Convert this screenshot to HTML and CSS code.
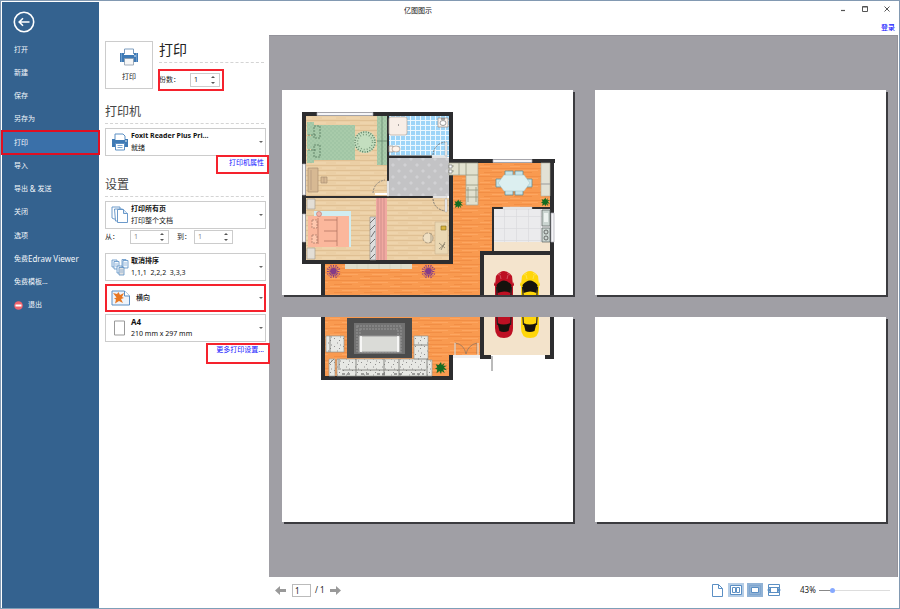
FILE: index.html
```html
<!DOCTYPE html>
<html lang="zh-CN">
<head>
<meta charset="utf-8">
<title>亿图图示</title>
<link rel="stylesheet" href="styles.css">
</head>
<body>
<div class="app">
  <nav class="sidebar">
    <button class="back" aria-label="返回">
      <svg viewBox="0 0 22 22"><circle cx="11" cy="11" r="9.7"/><path d="M16.5 11H6.5M10 7.2L6.2 11l3.8 3.8"/></svg>
    </button>
    <ul class="menu">
      <li><a href="#">打开</a></li>
      <li><a href="#">新建</a></li>
      <li><a href="#">保存</a></li>
      <li><a href="#">另存为</a></li>
      <li><a href="#" class="active marked">打印</a></li>
      <li><a href="#">导入</a></li>
      <li><a href="#">导出 <span class="latin">&amp;</span> 发送</a></li>
      <li><a href="#">关闭</a></li>
      <li><a href="#">选项</a></li>
      <li><a href="#">免费<span class="latin">Edraw Viewer</span></a></li>
      <li><a href="#">免费模板...</a></li>
      <li><a href="#"><svg class="exit" viewBox="0 0 9 9"><circle cx="4.500" cy="4.500" r="4.300" fill="#f0636c"/><rect x="1.500" y="3.500" width="6" height="2" fill="#fff"/></svg>退出</a></li>
    </ul>
  </nav>

  <div class="workspace">
    <header class="titlebar">
      <h1 class="title">亿图图示</h1>
      <div class="window-buttons">
        <button aria-label="最小化"><svg viewBox="0 0 8 8"><path d="M2 5.500h4" stroke-width="1.200"/></svg></button>
        <button aria-label="最大化"><svg viewBox="0 0 8 8"><path d="M1.500 1.500h5v5h-5zM1.500 2h5"/></svg></button>
        <button aria-label="关闭窗口"><svg viewBox="0 0 8 8"><path d="M1.500 1.500l5 5M6.500 1.500l-5 5"/></svg></button>
      </div>
      <a class="login" href="#">登录</a>
    </header>

    <div class="body">
      <main class="settings">
        <section class="print-top">
          <button class="print-button">
            <svg class="printer" viewBox="0 0 20 18"><path d="M5.500 6V1h9v5" fill="#fff" stroke="#7d9dbf"/><path d="M1 5h4v2h10V5h4v9H1z" fill="#3f7ab5"/><path d="M2.500 5v9M17.500 5v9" stroke="#8db4da" stroke-width=".6"/><circle cx="16" cy="8" r=".8" fill="#fff"/><path d="M5.500 10.500h9v6.500h-9z" fill="#f6f6f6" stroke="#8c9bab" stroke-width=".8"/></svg>
            <span>打印</span>
          </button>
          <div class="print-copy">
            <h2 class="main-heading">打印</h2>
            <div class="copies marked">
              <label for="copies">份数：</label>
              <span class="spin"><input id="copies" type="text" value="1"><svg viewBox="0 0 6 10"><path d="M1 3l2-2 2 2zM1 7l2 2 2-2z"/></svg></span>
            </div>
          </div>
        </section>

        <h2 class="heading">打印机</h2>
        <button class="combo" aria-haspopup="listbox">
          <svg class="icon" viewBox="0 0 18 18"><path d="M4 7V1h8l2 2v5" fill="#fff" stroke="#5b8fc4"/><path d="M1 6h3v1h10V6h3v8H1z" fill="#3f7ab5"/><circle cx="15" cy="8" r=".8" fill="#fff"/><path d="M4.500 10.500h9V17h-9z" fill="#fff" stroke="#5b8fc4"/><path d="M6.500 12.500h5M6.500 14.500h5" stroke="#5b8fc4" stroke-width=".8"/></svg>
          <span class="combo-text"><strong>Foxit Reader Plus Pri...</strong><span>就绪</span></span>
          <i class="caret"></i>
        </button>
        <a class="link printer-link marked" href="#">打印机属性</a>

        <h2 class="heading second">设置</h2>
        <button class="combo" aria-haspopup="listbox">
          <svg class="icon" viewBox="0 0 18 18"><g fill="#fff" stroke="#5b8fc4" stroke-width=".9"><path d="M1 1h8v12H3L1 12z"/><path d="M3.500 3h8v12h-7z"/><path d="M6.500 3.500h6l4 4v9h-10z"/><path d="M12.500 3.500v4h4" fill="#dce9f6"/></g></svg>
          <span class="combo-text"><strong>打印所有页</strong><span>打印整个文档</span></span>
          <i class="caret"></i>
        </button>
        <div class="range">
          <label for="from">从：</label>
          <span class="spin"><input id="from" type="text" value="1"><svg viewBox="0 0 6 10"><path d="M1 3l2-2 2 2zM1 7l2 2 2-2z"/></svg></span>
          <label for="to" class="to">到：</label>
          <span class="spin"><input id="to" type="text" value="1"><svg viewBox="0 0 6 10"><path d="M1 3l2-2 2 2zM1 7l2 2 2-2z"/></svg></span>
        </div>
        <button class="combo" aria-haspopup="listbox">
          <svg class="icon" viewBox="0 0 18 18"><g fill="#f4f9fe" stroke="#5b8fc4" stroke-width=".8"><path d="M1 2h5v7H1z"/><path d="M3 3.500h5V11H3z"/><path d="M11 1.500h4V9h-4z"/><path d="M12 2.500h5V10h-5z"/><path d="M6 8h5v7H6z"/><path d="M8 9.500h5V17H8z" fill="#e2e2e2"/></g><path d="M4 6h3M4 8h3M13 5h3M13 7h3M9 12h3M9 14h3" stroke="#7ba5d0" stroke-width=".7"/></svg>
          <span class="combo-text"><strong>取消排序</strong><span>1,1,1  2,2,2  3,3,3</span></span>
          <i class="caret"></i>
        </button>
        <button class="combo marked orientation" aria-haspopup="listbox">
          <svg class="icon wide" viewBox="0 0 20 16"><path d="M1 1h12.500l5 5v9H1z" fill="#eef4fb" stroke="#5b8fc4"/><path d="M13.500 1v5h5" fill="#fff" stroke="#5b8fc4"/><path d="M2 3l4 1 1.500-2 1.500 3 4-2-2 4 2 1-3 1 2 4-4-2-4 2.500 1-4-2-1 2.500-1z" fill="#e87722"/></svg>
          <span class="combo-text">横向</span>
          <i class="caret"></i>
        </button>
        <button class="combo" aria-haspopup="listbox">
          <svg class="icon" viewBox="0 0 18 18"><path d="M3.500 2h10v14h-10z" fill="#fff" stroke="#999"/></svg>
          <span class="combo-text"><strong class="latin">A4</strong><span>210 mm x 297 mm</span></span>
          <i class="caret"></i>
        </button>
        <a class="link more-link marked" href="#">更多打印设置...</a>
      </main>

      <section class="preview-pane">
        <div class="preview">
          <div class="page">
            <svg viewBox="282 90 291 205" role="img" aria-label="户型平面图">
              <defs>
                <pattern id="wood" width="24" height="10" patternUnits="userSpaceOnUse"><path d="M0 0h24v10H0z" fill="#ebcfa5"/><path d="M0 .5h24M0 5.500h24" stroke="#e0c093"/><path d="M0 3h14M10 8h14" stroke="#f2dab3"/></pattern>
                <pattern id="orange" width="30" height="8" patternUnits="userSpaceOnUse"><path d="M0 0h30v8H0z" fill="#f99a50"/><path d="M0 .5h30M4 4.500h18" stroke="#f08b42" stroke-width=".8"/><path d="M12 2.500h16M0 6.500h10" stroke="#ffaa68" stroke-width=".7"/></pattern>
                <pattern id="tile" width="5" height="5" patternUnits="userSpaceOnUse"><path d="M0 0h5v5H0z" fill="#9ed5f8"/><path d="M0 .5h5M.5 0v5" stroke="#ecf8ff"/></pattern>
                <pattern id="grey" width="12" height="12" patternUnits="userSpaceOnUse"><path d="M0 0h12v12H0z" fill="#c3c3c5"/><path d="M3 1l2 2-2 2-2-2zM9 7l2 2-2 2-2-2z" fill="#d1d1d4"/></pattern>
                <pattern id="floor" width="12" height="12" patternUnits="userSpaceOnUse"><path d="M0 0h12v12H0z" fill="#ebebed"/><path d="M0 .5h12M.5 0v12" stroke="#dadadd" stroke-width=".7"/></pattern>
                <pattern id="sage" width="4" height="4" patternUnits="userSpaceOnUse"><path d="M0 0h4v4H0z" fill="#a8cbaa"/><path d="M0 1h2M2 3h2" stroke="#95bb9b" stroke-width=".7"/></pattern>
                <pattern id="marble" width="9" height="8" patternUnits="userSpaceOnUse"><path d="M0 0h9v8H0z" fill="#e7e8e4"/><path d="M1 2l1 1M6 5l1-1M4 7h1M7 1h1" stroke="#777" stroke-width=".8"/></pattern>
                <symbol id="car" viewBox="0 0 20 44"><path d="M2 5Q10-5 18 5l1 9v19q0 10-9 10T1 33V14z" fill="currentColor"/><path d="M1 11l-1 2v2l2-1M19 11l1 2v2l-2-1" fill="currentColor"/><path d="M2.500 14Q10 5 17.500 14l-1 8q-6-3-13 0zM3.500 28q6 3 13 0l-2 8q-5 2-9 0z" fill="#16120d"/><path d="M2.500 16l1 14M17.500 16l-1 14" stroke="#222" stroke-width="1.200"/><path d="M4 4l3-2M16 4l-3-2M6 4l1 4M14 4l-1 4" stroke="#fff" stroke-opacity=".4" stroke-width=".7"/></symbol>
                <symbol id="bush" viewBox="-8 -8 16 16"><path d="M0-8l1 4 4-3-2 4 5 0-4 2 4 4-5-1 2 5-4-3-1 4-2-4-4 3 1-5-3-1 3-2-2-4 4 1z" fill="currentColor"/></symbol>
                <symbol id="flowers" viewBox="-8 -8 16 16"><path d="M0-7V7M-7 0H7M-5-5L5 5M5-5L-5 5M-3-7L3 7M3-7L-3 7M-7-3L7 3M7-3L-7 3" stroke="#843c87" stroke-width="1.200" stroke-dasharray="2 .7"/><circle r="3" fill="#843c87"/></symbol>
              </defs>
              <!-- floors -->
              <path d="M325 263V295H484V252H550V160H452V263z" fill="url(#orange)"/>
              <path d="M305 115H388V197H305zM305 198H449V261H305z" fill="url(#wood)"/>
              <path d="M389 115h60v42h-60z" fill="url(#tile)"/>
              <path d="M389 158h60v38h-60z" fill="url(#grey)"/>
              <path d="M494 209h56v34h-56z" fill="url(#floor)"/>
              <path d="M494 242h56v10h-56zM484 255h66v40h-66z" fill="#f4e4cd"/>
              <!-- walls -->
              <g fill="#2d2d2f">
                <path d="M302 112h151v4H302zM302 112h4v151h-4zM449 112h4v151h-4zM302 260h151v4H302zM321 263h4v32h-4z"/>
                <path d="M387 116h2v66h-2zM389 155.500h43v2.500h-43zM306 196h127v2H306z"/>
                <path d="M449 159h106v4H449zM550 159h4v136h-4zM480 251h70v4h-70zM480 251h4v44h-4zM492 207h2v44h-2zM492 207h11v2h-11zM532 207h18v2h-18z"/>
              </g>
              <path d="M317 112.500h56v3h-56zM302.500 164h3v31h-3zM302.500 214h3v28h-3zM493 159.500h39v3h-39zM551 213h3v29h-3z" fill="#f5f5f7" stroke="#aaaab3" stroke-width=".7"/>
              <path d="M503 207h29v2h-29zM387 181h2v15h-2zM433 196h14v2h-14zM432 156h15v2h-15z" fill="#eee" stroke="#bbb" stroke-width=".4"/>
              <!-- bedroom -->
              <path d="M311 125h44v35h-44zM377 116h10v49h-10zM307 122h7v13h-7zM307 136h7v13h-7zM307 150h7v13h-7z" fill="url(#sage)"/>
              <path d="M314 126h6v12h-6zM308 135h9M308 150h9M314 145h6v12h-6z" fill="none" stroke="#54775c" stroke-width=".8" stroke-dasharray="2 1"/>
              <path d="M382 116v49M377 141h10" stroke="#5f8068" stroke-width=".7"/>
              <circle cx="365" cy="142" r="11" fill="#c3debf"/><circle cx="365" cy="142" r="10" fill="none" stroke="#587a5e" stroke-width="1.500" stroke-dasharray="1 1.500"/><circle cx="365" cy="142" r="7.500" fill="none" stroke="#7c9d7f" stroke-width="1.500" stroke-dasharray="1 2"/>
              <path d="M308 168h10v24h-10zM321 177h6v6h-6z" fill="#d7b993" stroke="#ab9173" stroke-width=".7"/><path d="M311 170v20M324 177v6" stroke="#a98f78" stroke-width=".6"/>
              <path d="M373 193q1-11 12-13" fill="none" stroke="#777" stroke-width=".8" stroke-dasharray="2 1"/><path d="M375 193h12v2h-12z" fill="#fff"/>
              <!-- bathroom -->
              <rect x="389" y="117" width="18" height="18" rx="2" fill="#f8eee7" stroke="#b7a69b" stroke-width=".7"/><path d="M438 118h10v9h-10zM389 146h4v6h-4z" fill="#faf3ee" stroke="#998d85" stroke-width=".7"/>
              <ellipse cx="443" cy="123" rx="3" ry="2.500" fill="#fff" stroke="#777" stroke-width=".7"/><ellipse cx="396" cy="149" rx="4" ry="3" fill="#fff3ea" stroke="#ad9c90" stroke-width=".7"/><path d="M398 125h1M441 119h4" stroke="#555"/>
              <path d="M433 155q1-11 12-13M433 199q1 10 12 12" fill="none" stroke="#666" stroke-width=".8" stroke-dasharray="2 1"/><path d="M445 142h2v14h-2zM445 199h2v13h-2z" fill="#f5f5f5" stroke="#999" stroke-width=".4"/>
              <!-- lower rooms -->
              <path d="M307 199h8v10h-8zM307 248h8v11h-8z" fill="#e3ded5" stroke="#a9a093" stroke-width=".7"/>
              <path d="M314 211h37v36h-37z" fill="#d0edf1"/><path d="M308 216h41v31h-41z" fill="#fbb79c"/><path d="M337 217v29M324 220h13M324 231h13M324 241h13M318 218v26" stroke="#ae6e5d" stroke-width=".7"/><path d="M312 220h5v8h-5zM312 235h5v8h-5z" fill="#ffc7ad" stroke="#966858" stroke-width=".6" stroke-dasharray="2 1"/><circle cx="319" cy="214" r="2.500" fill="#f3b4a6" stroke="#bb7469" stroke-width=".6"/>
              <path d="M370 217h6v43h-6z" fill="#ddd" stroke="#888" stroke-width=".6"/><path d="M370 223l5-5M370 230l5-5M371 237l4-6M370 244l5-5M371 252l4-6M370 259l5-5" stroke="#555" stroke-width=".8"/>
              <path d="M376 198h11v62h-11z" fill="#f1a9a1"/><path d="M378 198v62M381 198v62M384 198v62" stroke="#c08482" stroke-width=".7"/>
              <path d="M435 222h13v32h-13z" fill="#ead8b4" stroke="#cbb48f" stroke-width=".6"/><path d="M441 226h5v4h-5z" fill="#d8b43d" stroke="#806821" stroke-width=".6"/><path d="M439 243l6 5M445 242l-4 8M439 249l6-5" stroke="#7c7460" stroke-width=".7"/><circle cx="428" cy="238" r="5" fill="#efdfc2" stroke="#9b8c75" stroke-width=".8" stroke-dasharray="3 1"/><path d="M431 233v10" stroke="#998970" stroke-width=".7"/>
              <path d="M345 264h67v5h-67z" fill="#deddcc"/><path d="M357 264v5M368 264v5M379 264v5M390 264v5M401 264v5" stroke="#cbccba" stroke-width=".6"/>
              <use href="#flowers" x="326" y="264" width="15" height="15"/><use href="#flowers" x="421" y="264" width="15" height="15"/>
              <!-- living, kitchen and garage -->
              <path d="M449 163h29v42h-12v-30h-17z" fill="#e1e1cf" stroke="#a4a590" stroke-width=".7"/><path d="M466 163v12h12M466 185h12M466 190h12M466 197h12M468 187v15M476 187v15M449 166h5M449 171h5M459 163v12" fill="none" stroke="#93947f" stroke-width=".8"/><path d="M449 165h3v3h-3zM449 170h3v3h-3z" fill="#fff" stroke="#555" stroke-width=".5"/>
              <path d="M505 171h8v5h-8zM515 171h8v5h-8zM505 190h8v5h-8zM515 190h8v5h-8zM496 179h5v8h-5zM527 179h5v8h-5z" fill="#c9e4e7" stroke="#58858d" stroke-width=".7"/><path d="M504 175h20l6 8-6 8h-20l-6-8z" fill="#dceff0" stroke="#9dc0c4" stroke-width=".5"/>
              <path d="M541 163h9v33h-9z" fill="#e2e1d5" stroke="#b4b09f" stroke-width=".6"/><path d="M541 184h9" stroke="#999"/>
              <path d="M542 210h8v16h-8zM542 228h8v14h-8z" fill="#cbd5d1" stroke="#59635f" stroke-width=".7"/><path d="M544 213h4v9h-4z" fill="#edf2f0"/><circle cx="546" cy="232" r="2" fill="none" stroke="#444" stroke-width=".7"/><circle cx="546" cy="238" r="2" fill="none" stroke="#444" stroke-width=".7"/>
              <g color="#136c22"><use href="#bush" x="454" y="199" width="9" height="10"/><use href="#bush" x="541" y="197" width="9" height="10"/></g>
              <use href="#car" x="494" y="271" width="20" height="44" color="#bd1023"/><use href="#car" x="520" y="271" width="20" height="44" color="#ffd60a"/>
            </svg>
          </div>
          <div class="page"></div>
          <div class="page">
            <svg viewBox="282 317 291 205" role="img" aria-label="户型平面图下半部分">
              <path d="M325 317h156v38h-31v22H325z" fill="url(#orange)"/><path d="M484 317h66v38h-66z" fill="#f3e3cb"/>
              <path d="M321 317h4v59h124v-21h4v25H321zM480 317h4v38h7v4h-11zM550 317h4v42h-9v-4h5z" fill="#2d2d2f"/>
              <path d="M453 355h27v3h-27z" fill="#efeff0"/><path d="M492 356v15" stroke="#777"/>
              <path d="M347 318h65v40h-65z" fill="#4b4b4b"/><path d="M354 323h51v31h-51z" fill="#727272"/><path d="M357 326h44v26h-44zM360 329h38v20h-38z" fill="none" stroke="#8b8b8b" stroke-width="1.500" stroke-dasharray="2 1"/>
              <path d="M359 336h41v16h-41z" fill="#dadbd7" stroke="#999"/><path d="M361 336v16M398 336v16" stroke="#fff" stroke-width="1.500"/>
              <path d="M326 336h18v16h-18zM329 359h6v17h-6zM337 359h77v-23h14v24h4v16h-95z" fill="url(#marble)" stroke="#999b96" stroke-width=".7"/>
              <path d="M330 336v16M356 359v17M384 359v17M399 359v17M414 345h14M414 359h14M342 370h84M329 364l5-5M339 359v11M427 359v17" fill="none" stroke="#737570" stroke-width=".8"/>
              <path d="M342 374h8M361 374h9M377 374h10M394 374h9M412 374h12" stroke="#555" stroke-dasharray="3 2"/>
              <path d="M455 354v-11q9 1 11 11 2-9 11-11v11" fill="none" stroke="#9b785f" stroke-width=".8"/><path d="M455 343v12M478 343v12" stroke="#f2eee9"/>
              <use href="#bush" x="435" y="362" width="12" height="12" color="#136c22"/>
              <use href="#car" x="494" y="295" width="20" height="44" color="#bd1023"/><use href="#car" x="520" y="295" width="20" height="44" color="#ffd60a"/>
            </svg>
          </div>
          <div class="page"></div>
        </div>
        <footer class="statusbar">
          <button class="arrow" aria-label="上一页"><svg viewBox="0 0 11 9"><path d="M0 4.500L5 0v3h6v3H5v3z"/></svg></button>
          <input class="page-number" type="text" value="1" aria-label="页码">
          <span class="page-total">/ 1</span>
          <button class="arrow" aria-label="下一页"><svg viewBox="0 0 11 9"><path d="M11 4.500L6 0v3H0v3h6v3z"/></svg></button>
          <div class="views">
            <button aria-label="单页"><svg viewBox="0 0 16 14"><path d="M3.500 1.500h6l4 4v8h-10zM9.500 1.500v4h4"/></svg></button>
            <button class="on" aria-label="多页"><svg viewBox="0 0 16 14"><path d="M2.500 2.500h11v9h-11z" fill="#fff"/><path d="M4.500 4.500h3v5h-3zM8.500 4.500h3v5h-3z"/></svg></button>
            <button class="on dark" aria-label="适合页面"><svg viewBox="0 0 16 14"><path d="M2.500 2.500h11v9h-11z" stroke="#7fa6d0"/><path d="M4.500 4.500h7v5h-7z" fill="#fff"/></svg></button>
            <button aria-label="适合宽度"><svg viewBox="0 0 16 14"><path d="M2.500 1.500h11v11h-11zM2.500 4.500h11M2.500 9.500h11M4.500 4.500v5M11.500 4.500v5"/><path d="M1 7l3-2v4zM15 7l-3-2v4z" fill="#5b8fc4" stroke="none"/></svg></button>
          </div>
          <label class="zoom-value" for="zoom">43%</label>
          <input id="zoom" class="zoom" type="range" min="0" max="100" value="16">
        </footer>
      </section>
    </div>
  </div>
</div>
</body>
</html>
```
FILE: styles.css
```css
* { box-sizing: border-box; }
body {
  margin: 0;
  background: #fff;
  color: #222;
  font: 7px/12px "Noto Sans", "Noto Sans CJK SC", sans-serif;
}
button, input { font: inherit; color: inherit; margin: 0; padding: 0; border: 0; background: none; }
a { text-decoration: none; }
h1, h2 { margin: 0; font-weight: 400; }
svg { display: block; }
.latin { font-size: 8px; }
.marked { outline: 2px solid #f5222d; outline-offset: -1px; }

.app {
  display: flex;
  min-height: 100vh;
  border: 1px solid #8299b2;
  border-bottom-color: #7f9fb8;
}

/* sidebar */
.sidebar {
  flex: 0 0 97px;
  margin: 1px 0 0 1px;
  padding-top: 9px;
  background: #34628f;
  color: #f3f7fb;
}
.back { width: 22px; height: 22px; margin-left: 11px; }
.back svg { fill: none; stroke: #fff; stroke-width: 1.6; }
.menu {
  display: flex;
  flex-direction: column;
  min-height: 279px;
  margin: 1px 0 0;
  padding: 0;
  list-style: none;
}
.menu li { flex: 1; display: flex; }
.menu a {
  flex: 1;
  display: flex;
  align-items: center;
  padding-left: 12px;
  color: inherit;
  white-space: pre;
}
.menu .active { position: relative; background: #3a70a9; outline-color: #e00f22; }
.exit { width: 9px; height: 9px; margin-right: 5px; }

/* title bar */
.workspace { flex: 1; display: flex; flex-direction: column; min-width: 0; }
.titlebar {
  display: grid;
  grid-template-columns: 1fr auto;
  grid-template-rows: 20px 14px;
  align-items: center;
}
.title { padding-left: 305px; font-size: 7px; color: #111; }
.window-buttons { display: flex; gap: 14px; padding-right: 8px; margin-bottom: 4px; }
.window-buttons button { width: 8px; height: 8px; }
.window-buttons svg { fill: none; stroke: #555; stroke-width: 1; }
.login { grid-column: 2; justify-self: end; padding-right: 4px; font-weight: 500; color: #1414ff; }
.body { flex: 1; display: flex; }

/* settings */
.settings {
  position: relative;
  z-index: 1;
  flex: 0 0 170px;
  display: flex;
  flex-direction: column;
  align-items: stretch;
  padding: 6px 3px 0 6px;
}
.print-top { display: flex; gap: 6px; height: 56px; }
.print-button {
  display: flex;
  flex-direction: column;
  align-items: center;
  justify-content: center;
  gap: 5px;
  width: 48px;
  height: 48px;
  border: 1px solid #ccc;
}
.printer { width: 20px; height: 18px; }
.print-copy { flex: 1; }
.main-heading {
  height: 22px;
  margin-right: 2px;
  border-bottom: 1px dashed #d4d4d4;
  font-size: 14px;
  line-height: 18px;
}
.copies { display: inline-flex; align-items: center; width: 64px; height: 20px; margin-top: 7px; }
.settings label { font-family: "Noto Sans", "Noto Sans CJK TC", sans-serif; }
.copies label { width: 31px; }
.copies .spin { width: 30px; }
.spin {
  display: flex;
  align-items: center;
  width: 39px;
  height: 14px;
  padding: 0 3px;
  border: 1px solid #ccc;
}
.spin input { flex: 1; width: 0; min-width: 0; height: 12px; }
.copies input { padding-left: 0; }
.spin svg { width: 6px; height: 10px; fill: #555; }
.heading {
  height: 20px;
  margin: 7px 2px 4px 0;
  border-bottom: 1px dashed #d4d4d4;
  font-size: 12px;
  line-height: 16px;
  color: #444;
}
.heading.second { margin-top: 4px; }
.combo {
  display: flex;
  align-items: center;
  gap: 2px;
  height: 28px;
  padding: 0 2px 0 5px;
  border: 1px solid #ccc;
  text-align: left;
  color: #111;
}
.icon { flex: 0 0 auto; width: 18px; height: 18px; }
.icon.wide { width: 20px; height: 16px; }
.combo-text { flex: 1; display: flex; flex-direction: column; white-space: pre; }
.combo-text strong { font-weight: 700; }
.caret { border: 2px solid transparent; border-top-color: #666; border-bottom: 0; }
.orientation { margin: 3px 0 2px; outline-offset: -2px; }
.orientation .combo-text { padding-left: 3px; font-weight: 500; }
.link { align-self: flex-end; color: #1414ff; white-space: nowrap; }
.printer-link { height: 17px; margin-right: -2px; padding: 1px 4px 0 12px; }
.more-link { height: 19px; margin: 2px -3px 0 0; padding: 0 5px 0 9px; }
.range { display: flex; align-items: center; height: 14px; margin: 1px 0 9px; }
.range label { width: 25px; }
.range .to { width: 17px; margin-left: 8px; }
.range .spin { color: #888; }

/* preview */
.preview-pane { flex: 1; display: flex; flex-direction: column; min-width: 0; padding-right: 1px; }
.preview {
  flex: 1;
  display: grid;
  grid-template-columns: 1fr 1fr;
  gap: 22px;
  align-content: center;
  padding: 0 11px 2px 13px;
  background: #a09fa5;
  border: solid #93929a;
  border-width: 1px 1px 0 0;
}
.page { aspect-ratio: 291 / 205; background: #fff; box-shadow: 2px 2px 0 #3b3b3f; }
.page svg { width: 100%; height: 100%; }

.statusbar { display: flex; align-items: center; height: 31px; padding: 0 8px 5px 6px; }
.arrow { width: 11px; height: 9px; }
.arrow svg { fill: #999; }
.page-number { width: 19px; height: 13px; margin: 0 4px 0 6px; padding-left: 2px; border: 1px solid #bbb; font-size: 8px; }
.page-total { width: 15px; font-size: 8px; }
.views { display: flex; gap: 3px; margin: 0 18px 0 auto; }
.views button { width: 16px; height: 14px; }
.views svg { fill: none; stroke: #5b8fc4; stroke-width: 1; }
.views .on { background: #b5cde6; }
.views .dark { background: #92b3d6; }
.zoom-value { width: 19px; font-size: 8px; }
.zoom { appearance: none; width: 71px; height: 7px; }
.zoom::-webkit-slider-runnable-track { height: 1px; background: linear-gradient(90deg, #888 18%, #ddd 18%); }
.zoom::-webkit-slider-thumb { appearance: none; width: 5px; height: 5px; margin-top: -2px; border-radius: 50%; background: #86a9ff; }
```
